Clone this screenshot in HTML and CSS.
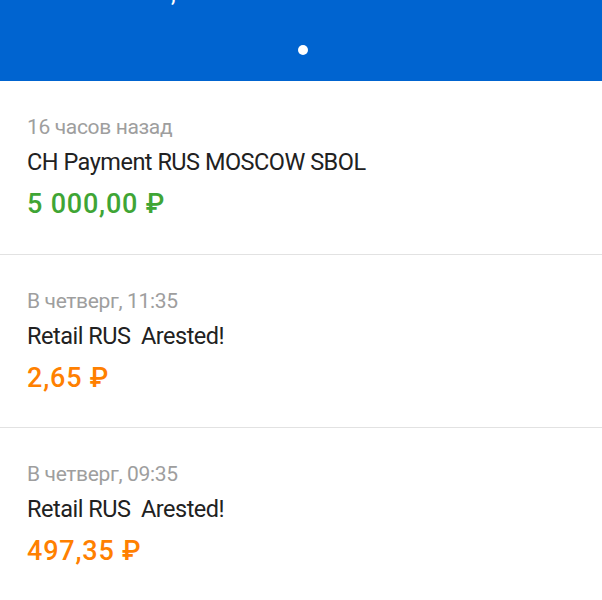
FILE: index.html
```html
<!DOCTYPE html>
<html lang="ru">
<head>
<meta charset="utf-8">
<link rel="stylesheet" href="styles.css">
</head>
<body>
<header class="header">
  <div class="header-title">,</div>
  <div class="pager"><span class="dot"></span></div>
</header>
<ul class="list">
  <li class="item">
    <div class="date">16 часов назад</div>
    <div class="title">CH Payment RUS MOSCOW SBOL</div>
    <div class="amount income">5 000,00 ₽</div>
  </li>
  <li class="item">
    <div class="date">В четверг, 11:35</div>
    <div class="title">Retail RUS&nbsp; Arested!</div>
    <div class="amount expense">2,65 ₽</div>
  </li>
  <li class="item">
    <div class="date">В четверг, 09:35</div>
    <div class="title">Retail RUS&nbsp; Arested!</div>
    <div class="amount expense">497,35 ₽</div>
  </li>
</ul>
</body>
</html>
```
FILE: styles.css
```css
html, body {
  margin: 0;
  padding: 0;
  background: #ffffff;
  font-family: Roboto, "Noto Sans", sans-serif;
}
.header {
  background: #0064d0;
  height: 81px;
  overflow: hidden;
  display: flex;
  flex-direction: column;
}
.header-title {
  color: #ffffff;
  font-size: 24px;
  line-height: 24px;
  margin-top: -18px;
  padding-left: 171px;
  height: 24px;
}
.pager {
  display: flex;
  justify-content: center;
  padding-top: 39px;
  padding-left: 4px;
}
.dot {
  width: 10px;
  height: 10px;
  border-radius: 50%;
  background: #ffffff;
}
.list {
  list-style: none;
  margin: 0;
  padding: 0;
}
.item {
  height: 173.5px;
  box-sizing: border-box;
  border-bottom: 1px solid #e2e2e2;
  padding: 34px 27px 0;
}
.date {
  color: #9e9e9e;
  font-size: 21px;
  letter-spacing: -0.35px;
  line-height: 24px;
}
.title {
  color: #212121;
  font-size: 23.5px;
  letter-spacing: -0.5px;
  line-height: 28px;
  margin-top: 9px;
}
.amount {
  font-size: 27px;
  font-weight: 500;
  letter-spacing: 0.8px;
  line-height: 30px;
  margin-top: 13px;
}
.income { color: #3fa535; }
.expense { color: #ff8000; }
```
